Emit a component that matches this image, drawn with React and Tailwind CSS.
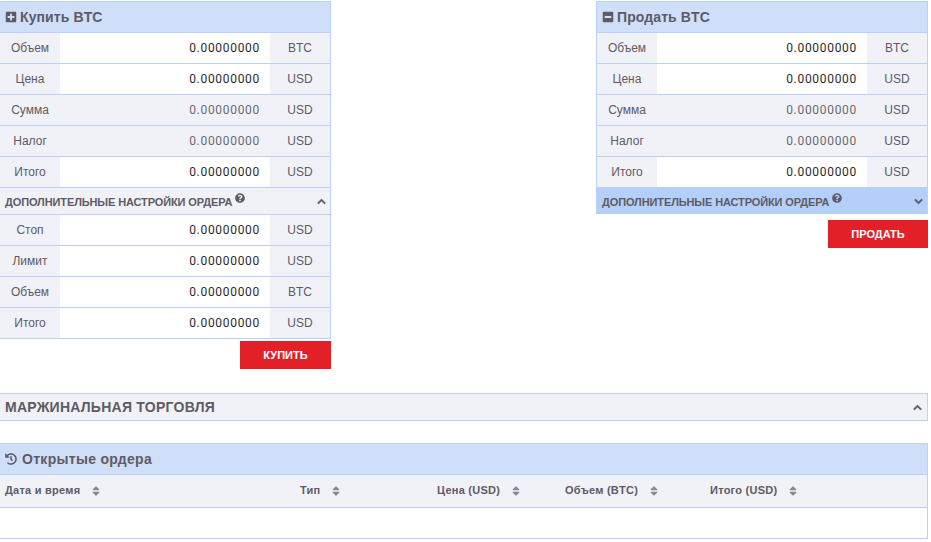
import React from 'react';
import { FaPlusSquare, FaMinusSquare, FaQuestionCircle, FaChevronUp, FaChevronDown, FaHistory, FaSort } from 'react-icons/fa';

const buyRows = [
  { label: 'Объем', unit: 'BTC', input: true },
  { label: 'Цена', unit: 'USD', input: true },
  { label: 'Сумма', unit: 'USD' },
  { label: 'Налог', unit: 'USD' },
  { label: 'Итого', unit: 'USD', input: true },
]

const stopRows = [
  { label: 'Стоп', unit: 'USD', input: true },
  { label: 'Лимит', unit: 'USD', input: true },
  { label: 'Объем', unit: 'BTC', input: true },
  { label: 'Итого', unit: 'USD', input: true },
]

const columns = ['Дата и время', 'Тип', 'Цена (USD)', 'Объем (BTC)', 'Итого (USD)']

const Row = ({ label, unit, input }) => (
  <div className={`flex h-[31px] border-b border-[#b9d1fb] ${input ? 'bg-white' : 'bg-[#f0f2f8]'}`}>
    <div className="w-[60px] bg-[#f0f2f8] flex items-center justify-center text-[12px] text-[#5f5a66]">{label}</div>
    <div className={`w-[210px] flex items-center justify-end pr-[10px] text-[12px] tracking-[0.7px] font-['Roboto',sans-serif] ${input ? 'text-[#2a2a2a]' : 'text-[#6b6870]'}`}>0.00000000</div>
    <div className="flex-1 bg-[#f0f2f8] flex items-center justify-center text-[12px] text-[#5f5a66]">{unit}</div>
  </div>
)

const TradePanel = ({ title, icon, rows, open, extra, button }) => (
  <div className="w-[332px] flex flex-col">
    <div className="border-x border-t border-[#b9d1fb]">
      <div className="h-[31px] bg-[#cfdff9] border-b border-[#b9d1fb] flex items-center pl-[5px] gap-[3px] text-[#5f5a66]">
        {icon}
        <span className="text-[14px] font-bold tracking-[0.1px]">{title}</span>
      </div>
      {rows.map((r) => <Row key={r.label} {...r} />)}
      <div className={`flex items-center justify-between pl-[5px] pr-[4px] pt-[2px] text-[#5f5a66] ${open ? 'h-[27px] bg-[#f0f2f8] border-b border-[#b9d1fb]' : 'h-[26px] bg-[#b5cffb]'}`}>
        <span className="flex items-start text-[11px] font-bold tracking-[-0.12px]">
          ДОПОЛНИТЕЛЬНЫЕ НАСТРОЙКИ ОРДЕРА
          <FaQuestionCircle className="ml-[3px] mt-[-1px] text-[10px]" />
        </span>
        {open
          ? <FaChevronUp className="text-[9px] stroke-[40] -mt-[2px]" />
          : <FaChevronDown className="text-[9px] stroke-[40] -mt-[2px]" />}
      </div>
      {extra && extra.map((r) => <Row key={r.label} {...r} />)}
    </div>
    <div className="flex justify-end mt-[2px]">
      <button type="button" className={`h-[28px] bg-[#e32028] text-white text-[11px] font-bold ${open ? 'w-[91px]' : 'w-[100px] mt-[4px]'}`}>{button}</button>
    </div>
  </div>
)

const App = () => {
  return (
    <div className="w-[931px] h-[542px] bg-white overflow-hidden pt-px font-['Liberation_Sans',Arial,sans-serif]">
      {/* left border of every panel sits just outside the viewport */}
      <div className="w-[929px] -ml-px">
        <div className="flex items-start justify-between">
          <TradePanel
            title="Купить BTC"
            icon={<FaPlusSquare className="text-[12px]" />}
            rows={buyRows}
            extra={stopRows}
            open
            button="КУПИТЬ"
          />
          <TradePanel
            title="Продать BTC"
            icon={<FaMinusSquare className="text-[12px]" />}
            rows={buyRows}
            button="ПРОДАТЬ"
          />
        </div>

        {/* Margin */}
        <div className="mt-[24px] h-[28px] bg-[#f0f2f8] border border-[#b9d1fb] flex items-center justify-between pl-[5px] pr-[5px] text-[#5f5a66]">
          <span className="text-[14px] font-bold tracking-[0.25px]">МАРЖИНАЛЬНАЯ ТОРГОВЛЯ</span>
          <FaChevronUp className="text-[9px] stroke-[40]" />
        </div>

        {/* Open orders */}
        <div className="mt-[22px] border border-[#b9d1fb]">
          <div className="h-[31px] bg-[#cfdff9] border-b border-[#b9d1fb] flex items-center pl-[5px] gap-[5px] text-[#5f5a66]">
            <FaHistory className="text-[12px]" />
            <span className="text-[14px] font-bold tracking-[0.3px]">Открытые ордера</span>
          </div>
          <div className="h-[33px] bg-[#f0f2f8] border-b border-[#b9d1fb] grid grid-cols-[295px_137px_128px_145px_1fr] items-center pl-[5px] pb-px text-[#5f5a66]">
            {columns.map((title) => (
              <div key={title} className="flex items-center text-[11px] font-bold tracking-[0.25px]">
                {title}
                <FaSort className="ml-[10px] text-[12px] text-[#8a8791]" />
              </div>
            ))}
          </div>
          <div className="h-[30px] bg-white" />
        </div>
      </div>
    </div>
  )
}

export default App
